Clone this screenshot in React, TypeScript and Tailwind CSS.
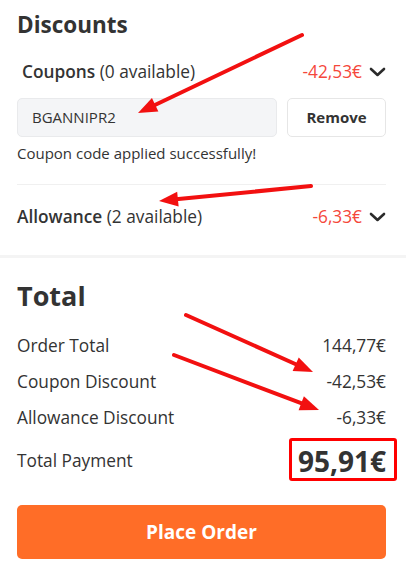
import React from "react";

const RED = "#f5473b";

const Chevron = () => (
  <svg width="17" height="10" viewBox="0 0 17 10" fill="none" className="shrink-0">
    <path d="M2 2l6.5 6 6.5-6" stroke="#2b2b2b" strokeWidth="2.6" strokeLinecap="round" strokeLinejoin="round" />
  </svg>
);

// annotation arrows drawn on top of the screenshot
const arrows: [number, number, number, number][] = [
  [302, 35, 138, 113],
  [311, 186, 159, 201],
  [186, 315, 313, 372],
  [174, 355, 319, 410],
];

const Arrow = ({ a }: { a: [number, number, number, number] }) => {
  const [x1, y1, x2, y2] = a;
  const dx = x2 - x1;
  const dy = y2 - y1;
  const len = Math.sqrt(dx * dx + dy * dy);
  const ux = dx / len;
  const uy = dy / len;
  const hl = 19;
  const hw = 7.5;
  const bx = x2 - ux * hl;
  const by = y2 - uy * hl;
  const pts = `${x2},${y2} ${bx - uy * hw},${by + ux * hw} ${bx + uy * hw},${by - ux * hw}`;
  return (
    <g>
      <line x1={x1} y1={y1} x2={bx + ux * 2} y2={by + uy * 2} stroke="#f21010" strokeWidth="4" strokeLinecap="round" />
      <polygon points={pts} fill="#f21010" />
    </g>
  );
};

const Row = ({ label, value }: { label: string; value: string }) => (
  <div className="flex items-center justify-between text-[17.3px] leading-[24px] text-[#333]">
    <span>{label}</span>
    <span>{value}</span>
  </div>
);

export default function App() {
  return (
    <div className="relative w-[406px] h-[577px] bg-white text-[#333] overflow-hidden" style={{ fontFamily: '"Open Sans", sans-serif' }}>
      <div className="pl-[17px] pr-[20px] pt-[10px] pb-[26px]">
        <h2 className="text-[22.5px] leading-[30px] font-bold">Discounts</h2>

        <div className="mt-[20px] pl-[5px] flex items-center justify-between text-[17.3px] leading-[24px]">
          <div>
            <span className="font-semibold">Coupons</span> (0 available)
          </div>
          <div className="flex items-center gap-[7px]">
            <span style={{ color: RED }}>-42,53€</span>
            <Chevron />
          </div>
        </div>

        <div className="mt-[14px] flex gap-[10px]">
          <div className="flex-1 h-[39px] rounded-[5px] border border-[#e9eaec] bg-[#f4f5f7] flex items-center px-[14px] text-[15px]">
            BGANNIPR2
          </div>
          <button className="w-[99px] h-[39px] rounded-[5px] border border-[#e6e6e6] bg-white text-[15px] font-bold">
            Remove
          </button>
        </div>

        <p className="mt-[6px] text-[15px] leading-[20px]">Coupon code applied successfully!</p>

        <div className="mt-[21px] h-px bg-[#f0f0f0]" />

        <div className="mt-[20px] flex items-center justify-between text-[17.3px] leading-[24px]">
          <div>
            <span className="font-semibold">Allowance</span> (2 available)
          </div>
          <div className="flex items-center gap-[7px]">
            <span style={{ color: RED }}>-6,33€</span>
            <Chevron />
          </div>
        </div>
      </div>

      <div className="h-[3px] bg-[#f4f4f4]" />

      <div className="pl-[17px] pr-[20px] pt-[20px]">
        <h2 className="text-[27px] leading-[36px] font-bold">Total</h2>

        <div className="mt-[20px] flex flex-col gap-[12px]">
          <Row label="Order Total" value="144,77€" />
          <Row label="Coupon Discount" value="-42,53€" />
          <Row label="Allowance Discount" value="-6,33€" />
        </div>

        <div className="mt-[13px] flex items-center justify-between">
          <span className="text-[17.3px] leading-[24px]">Total Payment</span>
          <span className="relative text-[28px] leading-[36px] font-bold">
            95,91€
            <span className="absolute -left-[9px] -right-[11px] -top-[5px] -bottom-[2px] border-[3px] border-[#ff0000] rounded-[3px]" />
          </span>
        </div>

        <button className="mt-[26px] w-full h-[54px] rounded-[5px] bg-[#ff6d27] text-white text-[19px] font-bold">
          Place Order
        </button>
      </div>

      <svg className="absolute inset-0 pointer-events-none" width="406" height="577">
        {arrows.map((a, i) => (
          <Arrow key={i} a={a} />
        ))}
      </svg>
    </div>
  );
}
